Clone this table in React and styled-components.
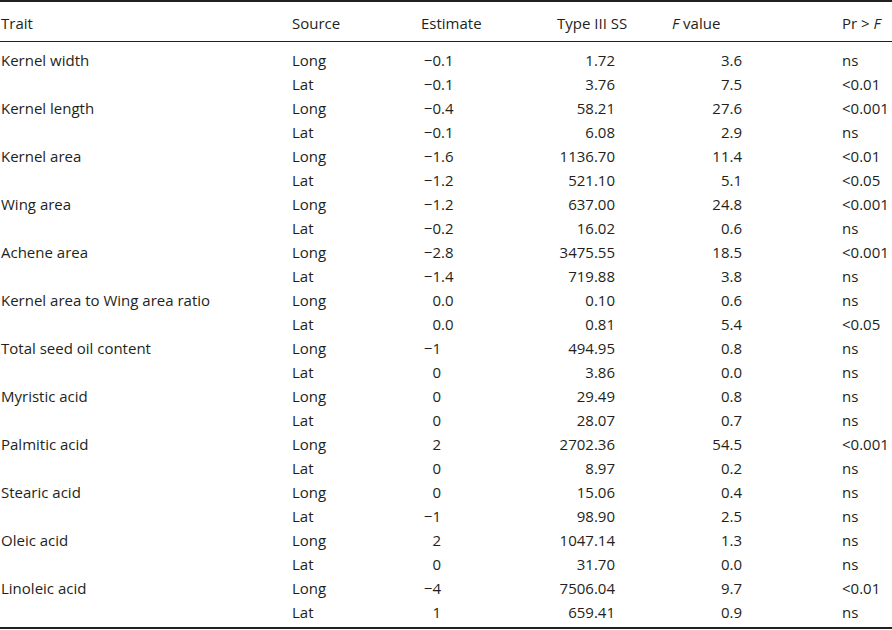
import React from "react";
import styled, { createGlobalStyle } from "styled-components";

const Global = createGlobalStyle`
  html, body { margin: 0; padding: 0; background: #fff; }
  body { font-family: "Open Sans", "Noto Sans", sans-serif; color: #231f20; }
`;

const Table = styled.div`
  width: 892px;
  border-top: 2px solid #231f20;
  border-bottom: 2px solid #231f20;
  font-size: 15px;
  line-height: 20px;
`;

const COLS = "292px 129px 136px 115px 170px 50px";

const HeadRow = styled.div`
  display: grid;
  grid-template-columns: ${COLS};
  padding: 11px 0 8px;
  border-bottom: 1px solid #231f20;
`;

const Body = styled.div`
  padding: 6px 0 3px;
`;

const Row = styled.div`
  display: grid;
  grid-template-columns: ${COLS};
  height: 24px;
  align-items: center;
`;

const Cell = styled.div`
  white-space: nowrap;
  min-width: 0;
  padding-left: ${(p) => (p.$first ? "1px" : "0")};
`;

const NumCell = styled.div`
  white-space: nowrap;
  text-align: right;
  padding-right: ${(p) => p.$pr}px;
`;

const DecCell = styled.div`
  white-space: nowrap;
  display: flex;
`;

const IntPart = styled.span`
  width: 20px;
  text-align: right;
`;

const Ital = styled.i`
  font-style: italic;
`;

const rows = [
  ["Kernel width", "−0.1", "1.72", "3.6", "ns", "−0.1", "3.76", "7.5", "<0.01"],
  ["Kernel length", "−0.4", "58.21", "27.6", "<0.001", "−0.1", "6.08", "2.9", "ns"],
  ["Kernel area", "−1.6", "1136.70", "11.4", "<0.01", "−1.2", "521.10", "5.1", "<0.05"],
  ["Wing area", "−1.2", "637.00", "24.8", "<0.001", "−0.2", "16.02", "0.6", "ns"],
  ["Achene area", "−2.8", "3475.55", "18.5", "<0.001", "−1.4", "719.88", "3.8", "ns"],
  ["Kernel area to Wing area ratio", "0.0", "0.10", "0.6", "ns", "0.0", "0.81", "5.4", "<0.05"],
  ["Total seed oil content", "−1", "494.95", "0.8", "ns", "0", "3.86", "0.0", "ns"],
  ["Myristic acid", "0", "29.49", "0.8", "ns", "0", "28.07", "0.7", "ns"],
  ["Palmitic acid", "2", "2702.36", "54.5", "<0.001", "0", "8.97", "0.2", "ns"],
  ["Stearic acid", "0", "15.06", "0.4", "ns", "−1", "98.90", "2.5", "ns"],
  ["Oleic acid", "2", "1047.14", "1.3", "ns", "0", "31.70", "0.0", "ns"],
  ["Linoleic acid", "−4", "7506.04", "9.7", "<0.01", "1", "659.41", "0.9", "ns"],
];

function Dec({ v }) {
  const i = v.indexOf(".");
  const a = i < 0 ? v : v.slice(0, i);
  const b = i < 0 ? "" : v.slice(i);
  return (
    <DecCell>
      <IntPart>{a}</IntPart>
      <span>{b}</span>
    </DecCell>
  );
}

function DataRow({ trait, source, est, ss, f, p }) {
  return (
    <Row>
      <Cell $first>{trait}</Cell>
      <Cell>{source}</Cell>
      <Dec v={est} />
      <NumCell $pr={57}>{ss}</NumCell>
      <NumCell $pr={100}>{f}</NumCell>
      <Cell>{p}</Cell>
    </Row>
  );
}

export default function App() {
  return (
    <>
      <Global />
      <Table>
        <HeadRow>
          <Cell $first>Trait</Cell>
          <Cell>Source</Cell>
          <Cell>Estimate</Cell>
          <Cell>Type III SS</Cell>
          <Cell>
            <Ital>F</Ital> value
          </Cell>
          <Cell>
            Pr &gt; <Ital>F</Ital>
          </Cell>
        </HeadRow>
        <Body>
          {rows.map((r) => (
            <React.Fragment key={r[0]}>
              <DataRow trait={r[0]} source="Long" est={r[1]} ss={r[2]} f={r[3]} p={r[4]} />
              <DataRow trait="" source="Lat" est={r[5]} ss={r[6]} f={r[7]} p={r[8]} />
            </React.Fragment>
          ))}
        </Body>
      </Table>
    </>
  );
}
